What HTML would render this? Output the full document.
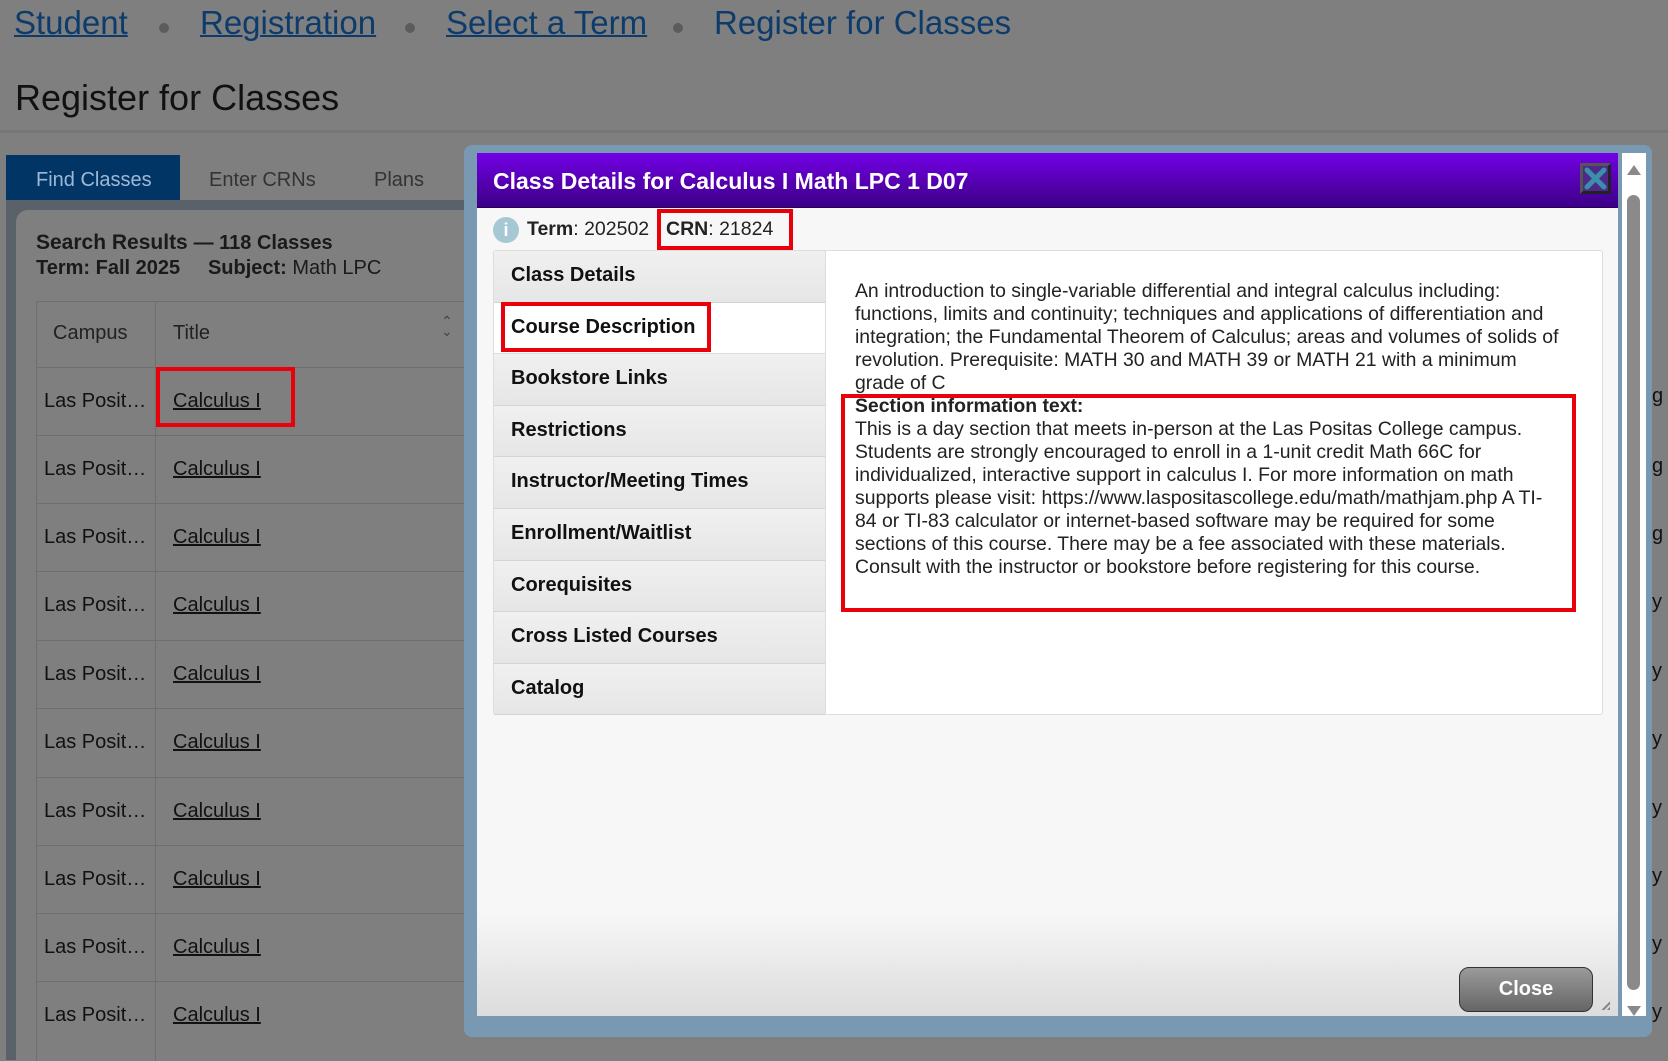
<!DOCTYPE html>
<html><head><meta charset="utf-8"><style>
*{margin:0;padding:0;box-sizing:border-box}
body{width:1668px;height:1055px;overflow:hidden;background:#7f7f7f;font-family:"Liberation Sans",Arial,sans-serif;position:relative}
.a{position:absolute;white-space:nowrap}
.bc{font-size:33px;color:#0d3c6c;top:4px}
.bc u{text-decoration-thickness:2px}
.dot{width:10px;height:10px;border-radius:50%;background:#5c5c5c;top:23px}
.row{position:absolute;left:36px;width:430px;height:68px;border-top:1px solid #6f6f6f;font-size:20px;color:#111}
.nav{position:absolute;left:0;width:331px;height:51.6px;background:linear-gradient(#f0f0f0,#e6e6e6);border-bottom:1px solid #d4d4d4;font-weight:bold;font-size:20px;color:#111;padding:13px 0 0 17px}
.red{position:absolute;border:4px solid #e8000b}
</style></head><body>
<div class="a bc" style="left:14px"><u>Student</u></div>
<div class="a dot" style="left:159px"></div>
<div class="a bc" style="left:200px"><u>Registration</u></div>
<div class="a dot" style="left:405px"></div>
<div class="a bc" style="left:446px"><u>Select a Term</u></div>
<div class="a dot" style="left:673px"></div>
<div class="a bc" style="left:714px">Register for Classes</div>
<div class="a" style="left:15px;top:77px;font-size:36px;color:#111">Register for Classes</div>
<div class="a" style="left:0;top:130px;width:1668px;height:3px;background:#767676"></div>
<div class="a" style="left:6px;top:155px;width:174px;height:45px;background:#003566;color:#9fb8d6;font-size:20px;padding:14px 0 0 30px">Find Classes</div>
<div class="a" style="left:209px;top:169px;font-size:20px;color:#333">Enter CRNs</div>
<div class="a" style="left:374px;top:169px;font-size:20px;color:#333">Plans</div>
<div class="a" style="left:6px;top:200px;width:470px;height:860px;background:#5a6168"></div>
<div class="a" style="left:16px;top:210px;width:460px;height:850px;background:#7f7f7f;border-radius:12px 0 0 0"></div>
<div class="a" style="left:36px;top:231px;font-size:21px;font-weight:bold;color:#1a1a1a">Search Results <span style="font-size:20px">— 118 Classes</span></div>
<div class="a" style="left:36px;top:257px;font-size:20px;color:#1a1a1a"><b>Term: Fall 2025</b>&nbsp;&nbsp;&nbsp;&nbsp; <b>Subject:</b> Math LPC</div>
<div class="a" style="left:36px;top:301px;width:430px;height:760px;border-left:1px solid #6f6f6f"></div>
<div class="a" style="left:155px;top:301px;width:1px;height:760px;background:#6f6f6f"></div>
<div class="row" style="top:301px;height:66px;color:#222"><span class="a" style="left:17px;top:20px">Campus</span><span class="a" style="left:137px;top:20px">Title</span><span class="a" style="left:405px;top:14px;font-size:14px;line-height:10px;color:#444">⌃<br>⌄</span></div>
<div class="row" style="top:367px"><span class="a" style="left:8px;top:22px">Las Posit…</span><span class="a" style="left:137px;top:22px;text-decoration:underline">Calculus I</span></div>
<div class="row" style="top:435px"><span class="a" style="left:8px;top:22px">Las Posit…</span><span class="a" style="left:137px;top:22px;text-decoration:underline">Calculus I</span></div>
<div class="row" style="top:503px"><span class="a" style="left:8px;top:22px">Las Posit…</span><span class="a" style="left:137px;top:22px;text-decoration:underline">Calculus I</span></div>
<div class="row" style="top:571px"><span class="a" style="left:8px;top:22px">Las Posit…</span><span class="a" style="left:137px;top:22px;text-decoration:underline">Calculus I</span></div>
<div class="row" style="top:640px"><span class="a" style="left:8px;top:22px">Las Posit…</span><span class="a" style="left:137px;top:22px;text-decoration:underline">Calculus I</span></div>
<div class="row" style="top:708px"><span class="a" style="left:8px;top:22px">Las Posit…</span><span class="a" style="left:137px;top:22px;text-decoration:underline">Calculus I</span></div>
<div class="row" style="top:777px"><span class="a" style="left:8px;top:22px">Las Posit…</span><span class="a" style="left:137px;top:22px;text-decoration:underline">Calculus I</span></div>
<div class="row" style="top:845px"><span class="a" style="left:8px;top:22px">Las Posit…</span><span class="a" style="left:137px;top:22px;text-decoration:underline">Calculus I</span></div>
<div class="row" style="top:913px"><span class="a" style="left:8px;top:22px">Las Posit…</span><span class="a" style="left:137px;top:22px;text-decoration:underline">Calculus I</span></div>
<div class="row" style="top:981px"><span class="a" style="left:8px;top:22px">Las Posit…</span><span class="a" style="left:137px;top:22px;text-decoration:underline">Calculus I</span></div>
<div class="red" style="left:156px;top:367px;width:139px;height:60px"></div>
<div class="a" style="left:1652px;top:385px;font-size:20px;color:#111">g</div>
<div class="a" style="left:1652px;top:455px;font-size:20px;color:#111">g</div>
<div class="a" style="left:1652px;top:523px;font-size:20px;color:#111">g</div>
<div class="a" style="left:1652px;top:591px;font-size:20px;color:#111">y</div>
<div class="a" style="left:1652px;top:660px;font-size:20px;color:#111">y</div>
<div class="a" style="left:1652px;top:728px;font-size:20px;color:#111">y</div>
<div class="a" style="left:1652px;top:797px;font-size:20px;color:#111">y</div>
<div class="a" style="left:1652px;top:865px;font-size:20px;color:#111">y</div>
<div class="a" style="left:1652px;top:933px;font-size:20px;color:#111">y</div>
<div class="a" style="left:1652px;top:1001px;font-size:20px;color:#111">y</div>

<div class="a" style="left:464px;top:145px;width:1188px;height:892px;background:#7899b1;border-radius:8px"></div>
<div class="a" style="left:477px;top:153px;width:1141px;height:863px;background:linear-gradient(#f7f7f7 0,#f7f7f7 88%,#dcdcdc 100%)"></div>
<div class="a" style="left:477px;top:153px;width:1141px;height:55px;background:linear-gradient(#7300e6,#3c0085);border-bottom:1px solid #2a0060"></div>
<div class="a" style="left:493px;top:168px;font-size:23px;font-weight:bold;color:#fff">Class Details for Calculus I Math LPC 1 D07</div>
<div class="a" style="left:1580px;top:163px;width:31px;height:31px;background:#4d2a8a;border:3px solid #222;border-left-color:#555;border-top-color:#555"><svg width="25" height="25" viewBox="0 0 25 25" style="display:block"><path d="M4 4L21 21M21 4L4 21" stroke="#3b8fa8" stroke-width="5" stroke-linecap="round"/></svg></div>
<div class="a" style="left:1622px;top:153px;width:24px;height:863px;background:#fff"></div>
<div class="a" style="left:1627px;top:165px;width:0;height:0;border-left:7px solid transparent;border-right:7px solid transparent;border-bottom:10px solid #8a8a8a"></div>
<div class="a" style="left:1627px;top:195px;width:13px;height:795px;background:#8a8a8a;border-radius:7px"></div>
<div class="a" style="left:1627px;top:1006px;width:0;height:0;border-left:7px solid transparent;border-right:7px solid transparent;border-top:10px solid #8a8a8a"></div>
<div class="a" style="left:493px;top:217px;width:26px;height:26px;border-radius:50%;background:#a6c8d4;color:#fff;font-weight:bold;font-size:18px;text-align:center;line-height:26px">i</div>
<div class="a" style="left:527px;top:218px;font-size:19.5px;color:#222"><b>Term</b>: 202502</div>
<div class="a" style="left:666px;top:218px;font-size:19.5px;color:#222"><b>CRN</b>: 21824</div>
<div class="red" style="left:657px;top:209px;width:136px;height:41px"></div>
<div class="a" style="left:493px;top:250px;width:1110px;height:465px;background:#fff;border:1px solid #ddd;border-radius:3px">
<div class="nav" style="top:0">Class Details</div>
<div class="nav" style="top:51.6px;background:#fff;border-bottom:1px solid #ddd">Course Description</div>
<div class="nav" style="top:103.2px">Bookstore Links</div>
<div class="nav" style="top:154.8px">Restrictions</div>
<div class="nav" style="top:206.4px">Instructor/Meeting Times</div>
<div class="nav" style="top:258px">Enrollment/Waitlist</div>
<div class="nav" style="top:309.6px">Corequisites</div>
<div class="nav" style="top:361.2px">Cross Listed Courses</div>
<div class="nav" style="top:412.8px;height:51px">Catalog</div>
<div class="a" style="left:331px;top:0;width:1px;height:463px;background:#ddd"></div>
<div class="a" style="left:361px;top:29px;width:710px;white-space:normal;font-size:19.4px;line-height:23px;color:#222">An introduction to single-variable differential and integral calculus including: functions, limits and continuity; techniques and applications of differentiation and integration; the Fundamental Theorem of Calculus; areas and volumes of solids of revolution. Prerequisite: MATH 30 and MATH 39 or MATH 21 with a minimum grade of C<br><b>Section information text:</b><br>This is a day section that meets in-person at the Las Positas College campus. Students are strongly encouraged to enroll in a 1-unit credit Math 66C for individualized, interactive support in calculus I. For more information on math supports please visit: https://www.laspositascollege.edu/math/mathjam.php A TI-<br>84 or TI-83 calculator or internet-based software may be required for some<br>sections of this course. There may be a fee associated with these materials.<br>Consult with the instructor or bookstore before registering for this course.</div>
</div>
<div class="red" style="left:501px;top:302px;width:210px;height:50px"></div>
<div class="red" style="left:841px;top:394px;width:735px;height:218px"></div>
<div class="a" style="left:1459px;top:967px;width:134px;height:45px;border:1px solid #333;border-radius:10px;background:linear-gradient(#9a9a9a,#666);color:#fff;font-weight:bold;font-size:20px;text-align:center;line-height:42px">Close</div>
<div class="a" style="left:1600px;top:1000px;width:10px;height:10px;background:repeating-linear-gradient(135deg,#888 0 2px,transparent 2px 4px);clip-path:polygon(100% 0,100% 100%,0 100%)"></div>
</body></html>
